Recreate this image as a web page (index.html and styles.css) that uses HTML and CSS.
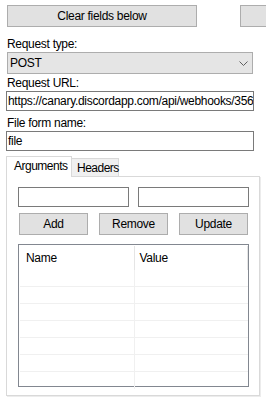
FILE: index.html
```html
<!DOCTYPE html>
<html lang="en">
<head>
  <meta charset="UTF-8">
  <title>Uploader settings</title>
  <link rel="stylesheet" href="styles.css">
</head>
<body>
  <!-- Top button row -->
  <div class="toolbar">
    <button class="btn btn-clear">Clear fields below</button>
    <button class="btn btn-extra"></button>
  </div>

  <!-- Request fields -->
  <div class="fields">
    <label class="field-label">Request type:</label>
    <div class="combo">
      <span>POST</span>
      <svg class="chevron" width="9" height="5" viewBox="0 0 9 5">
        <polyline points="0.5,0.5 4.5,4.5 8.5,0.5" fill="none" stroke="#606060" stroke-width="1"/>
      </svg>
    </div>

    <label class="field-label">Request URL:</label>
    <div class="textbox">https://canary.discordapp.com/api/webhooks/356</div>

    <label class="field-label">File form name:</label>
    <div class="textbox">file</div>
  </div>

  <!-- Tab control -->
  <div class="tabs">
    <div class="tab-strip">
      <div class="tab active">Arguments</div>
      <div class="tab">Headers</div>
    </div>
    <div class="tab-panel">
      <div class="inputs">
        <div class="textbox small"></div>
        <div class="textbox small"></div>
      </div>
      <div class="actions">
        <button class="btn btn-small">Add</button>
        <button class="btn btn-small">Remove</button>
        <button class="btn btn-small">Update</button>
      </div>
      <div class="list">
        <div class="list-head">
          <div class="col col-name">Name</div>
          <div class="col col-value">Value</div>
        </div>
        <div class="list-row"><div class="col col-name"></div><div class="col col-value"></div></div>
        <div class="list-row"><div class="col col-name"></div><div class="col col-value"></div></div>
        <div class="list-row"><div class="col col-name"></div><div class="col col-value"></div></div>
        <div class="list-row"><div class="col col-name"></div><div class="col col-value"></div></div>
        <div class="list-row"><div class="col col-name"></div><div class="col col-value"></div></div>
        <div class="list-row"><div class="col col-name"></div><div class="col col-value"></div></div>
        <div class="list-row last"><div class="col col-name"></div><div class="col col-value"></div></div>
      </div>
    </div>
  </div>
</body>
</html>
```

FILE: styles.css
```css
/* Base page, WinForms look */
body {
  margin: 0;
  width: 266px;
  height: 402px;
  overflow: hidden;
  background: #ffffff;
  font-family: "Liberation Sans", Arial, sans-serif;
  font-size: 12px;
  letter-spacing: -0.3px;
  color: #000;
}

/* Buttons */
.btn {
  box-sizing: border-box;
  background: #e1e1e1;
  border: 1px solid #adadad;
  font: inherit;
  letter-spacing: inherit;
  color: #000;
  padding: 0;
  margin: 0;
  flex-shrink: 0;
}

.toolbar {
  display: flex;
  overflow: hidden;
  padding: 5px 0 0 7px;
}

.btn-clear {
  width: 190px;
  height: 22px;
}

.btn-extra {
  width: 26px;
  height: 22px;
  margin-left: 43px;
  border-right: none;
}

/* Label + input stack */
.fields {
  display: flex;
  flex-direction: column;
  padding: 0 12px 0 6px;
}

.field-label {
  display: block;
  line-height: 14px;
  padding-left: 1px;
}

.fields .field-label:first-child {
  margin-top: 10px;
  margin-bottom: 1px;
}

.combo {
  box-sizing: border-box;
  height: 22px;
  margin-left: 1px;
  margin-right: 1px;
  background: #e5e5e5;
  border: 1px solid #adadad;
  display: flex;
  align-items: center;
  justify-content: space-between;
  padding: 0 4px 0 2px;
  margin-bottom: 2px;
}

.chevron {
  display: block;
}

.textbox {
  box-sizing: border-box;
  height: 20px;
  border: 1px solid #7a7a7a;
  background: #fff;
  line-height: 18px;
  padding: 0 1px;
  white-space: nowrap;
  overflow: hidden;
}

.fields .textbox {
  margin-top: 1px;
  margin-bottom: 5px;
}

/* Tab control */
.tabs {
  margin: 0 6px 0 6px;
}

.tab-strip {
  display: flex;
  align-items: flex-end;
  height: 20px;
}

.tab {
  box-sizing: border-box;
  width: 47px;
  height: 18px;
  line-height: 18px;
  padding-left: 5px;
  letter-spacing: -0.5px;
  background: #f0f0f0;
  border: 1px solid #d9d9d9;
  border-bottom: none;
  border-left: none;
}

.tab.active {
  width: 66px;
  height: 21px;
  background: #fff;
  border-left: 1px solid #d9d9d9;
  padding-left: 7px;
  line-height: 19px;
  position: relative;
  z-index: 1;
  margin-bottom: -1px;
}

.tab-panel {
  box-sizing: border-box;
  height: 220px;
  border: 1px solid #d9d9d9;
  box-shadow: 1px 1px 0 #ececec;
  background: #fff;
  padding: 10px 10px 0 11px;
}

.inputs {
  display: flex;
  gap: 9px;
}

.textbox.small {
  width: 111px;
}

.actions {
  display: flex;
  gap: 11px;
  margin-top: 6px;
  padding-left: 1px;
}

.btn-small {
  width: 69px;
  height: 22px;
}

/* ListView */
.list {
  box-sizing: border-box;
  width: 231px;
  height: 143px;
  margin-top: 9px;
  border: 1px solid #828790;
  padding: 1px 0 0 1px;
}

.list-head {
  display: flex;
  height: 24px;
  line-height: 24px;
}

.list-head .col {
  border-right: 1px solid #e5e5e5;
}

.list-head .col-name {
  padding-left: 6px;
}

.list-head .col-value {
  padding-left: 5px;
}

.col {
  box-sizing: border-box;
}

.col-name {
  width: 115px;
}

.col-value {
  width: 114px;
}

.list-row {
  display: flex;
  height: 17px;
  border-bottom: 1px solid #f0f0f0;
  box-sizing: border-box;
}

.list-row .col-name {
  border-right: 1px solid #f0f0f0;
}

.list-row.last {
  border-bottom: none;
}
```
